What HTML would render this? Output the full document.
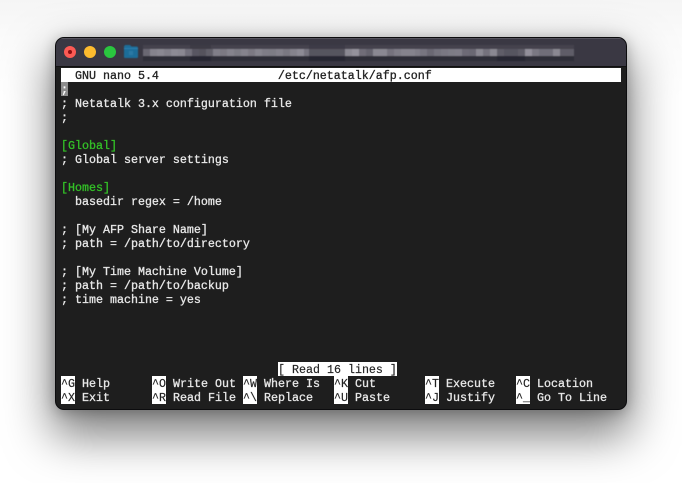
<!DOCTYPE html>
<html><head><meta charset="utf-8"><style>
html,body{margin:0;padding:0;background:#fff}
body{width:682px;height:483px;overflow:hidden;position:relative;font-family:"Liberation Mono",monospace}
#bg{position:absolute;left:0;top:0;width:682px;height:483px;background:linear-gradient(#f5f5f5 0,#fbfbfb 40px,#fff 100px)}
#win{position:absolute;left:55px;top:37px;width:570px;height:371px;border:1px solid #0c0c0e;border-radius:9px;background:#1e1e1e;box-shadow:0 22px 46px 4px rgba(0,0,0,.5),0 2px 14px rgba(0,0,0,.25);overflow:hidden}
#bar{position:absolute;left:0;top:0;width:570px;height:28px;background:#3a3843;border-bottom:1px solid #111;box-shadow:inset 0 1px 0 #55535d}
.d{position:absolute;width:12px;height:12px;border-radius:50%;top:8px}
#t{position:absolute;left:0;top:0;width:682px;height:483px;color:#e8e8e8;font-size:11.67px;line-height:16px}
#t div{position:absolute;white-space:pre;height:14px;letter-spacing:0;-webkit-text-stroke:.3px currentColor}
.i{background:#fff;color:#222}
#t div.i{-webkit-text-stroke:.15px currentColor}
.g{color:#33c127}
svg{position:absolute}
</style></head><body>
<div id="bg"></div>
<div id="win"><div id="bar">
<div class="d" style="left:8px;background:#fc5a54"><span style="position:absolute;left:4px;top:4px;width:4px;height:4px;border-radius:50%;background:#8e0d10"></span></div>
<div class="d" style="left:28px;background:#fdbb2e"></div>
<div class="d" style="left:48px;background:#2ac63f"></div>
</div></div>
<svg style="left:120px;top:40px" width="470" height="26" viewBox="120 40 470 26">
<defs><filter id="b" x="-5%" y="-30%" width="110%" height="160%"><feGaussianBlur stdDeviation=".6"/></filter></defs>
<g filter="url(#b)">
<path d="M124 47q0-2 2-2h4l1.500 1.500h5q1.500 0 1.500 1.500v9q0 1-1 1h-12q-1 0-1-1z" fill="#1f6d99"/>
<rect x="124" y="48" width="14" height="1" fill="#2d7fae"/>
<rect x="129" y="51" width="4" height="4" fill="#2b79a5"/>
<rect x="143" y="56" width="431" height="5" fill="#2f2d37"/>
<rect x="143" y="45" width="431" height="4" fill="#45434e"/>
<rect x="190" y="45" width="21" height="4" fill="#3c3a45"/>
<rect x="309" y="45" width="36" height="4" fill="#3d3b46"/>
<rect x="190" y="56" width="21" height="5" fill="#282630"/>
<rect x="309" y="56" width="36" height="5" fill="#272530"/>
<rect x="497" y="56" width="28" height="5" fill="#282630"/>
<rect x="143" y="49" width="7" height="7" fill="#6a6873"/>
<rect x="150" y="49" width="7" height="7" fill="#85838d"/>
<rect x="157" y="49" width="7" height="7" fill="#8a8892"/>
<rect x="164" y="49" width="7" height="7" fill="#82808a"/>
<rect x="171" y="49" width="7" height="7" fill="#8d8b95"/>
<rect x="178" y="49" width="7" height="7" fill="#8a8892"/>
<rect x="185" y="49" width="7" height="7" fill="#72707b"/>
<rect x="192" y="49" width="7" height="7" fill="#595762"/>
<rect x="199" y="49" width="7" height="7" fill="#54525d"/>
<rect x="206" y="49" width="7" height="7" fill="#62606b"/>
<rect x="213" y="49" width="7" height="7" fill="#807e88"/>
<rect x="220" y="49" width="7" height="7" fill="#7b7983"/>
<rect x="227" y="49" width="7" height="7" fill="#85838d"/>
<rect x="234" y="49" width="7" height="7" fill="#7d7b85"/>
<rect x="241" y="49" width="7" height="7" fill="#85838d"/>
<rect x="248" y="49" width="7" height="7" fill="#7b7983"/>
<rect x="255" y="49" width="7" height="7" fill="#87858f"/>
<rect x="262" y="49" width="7" height="7" fill="#7f7d87"/>
<rect x="269" y="49" width="7" height="7" fill="#7d7b85"/>
<rect x="276" y="49" width="7" height="7" fill="#83818b"/>
<rect x="283" y="49" width="7" height="7" fill="#7a7882"/>
<rect x="290" y="49" width="7" height="7" fill="#85838d"/>
<rect x="297" y="49" width="7" height="7" fill="#8d8b95"/>
<rect x="304" y="49" width="5" height="7" fill="#777580"/>
<rect x="309" y="49" width="36" height="7" fill="#56545f"/>
<rect x="345" y="49" width="7" height="7" fill="#8b8993"/>
<rect x="352" y="49" width="7" height="7" fill="#94929c"/>
<rect x="359" y="49" width="7" height="7" fill="#6f6d78"/>
<rect x="366" y="49" width="7" height="7" fill="#65636e"/>
<rect x="373" y="49" width="7" height="7" fill="#8a8892"/>
<rect x="380" y="49" width="7" height="7" fill="#8a8892"/>
<rect x="387" y="49" width="7" height="7" fill="#74727d"/>
<rect x="394" y="49" width="7" height="7" fill="#7f7d87"/>
<rect x="401" y="49" width="7" height="7" fill="#85838d"/>
<rect x="408" y="49" width="7" height="7" fill="#85838d"/>
<rect x="415" y="49" width="5" height="7" fill="#7f7d87"/>
<rect x="420" y="49" width="7" height="7" fill="#777580"/>
<rect x="427" y="49" width="7" height="7" fill="#6a6873"/>
<rect x="434" y="49" width="7" height="7" fill="#75737e"/>
<rect x="441" y="49" width="7" height="7" fill="#7a7883"/>
<rect x="448" y="49" width="7" height="7" fill="#7d7b86"/>
<rect x="455" y="49" width="7" height="7" fill="#7f7d88"/>
<rect x="462" y="49" width="7" height="7" fill="#6d6b76"/>
<rect x="469" y="49" width="7" height="7" fill="#6a6873"/>
<rect x="476" y="49" width="7" height="7" fill="#8a8892"/>
<rect x="483" y="49" width="7" height="7" fill="#74727d"/>
<rect x="490" y="49" width="7" height="7" fill="#8a8892"/>
<rect x="497" y="49" width="7" height="7" fill="#5f5d68"/>
<rect x="504" y="49" width="14" height="7" fill="#565460"/>
<rect x="518" y="49" width="7" height="7" fill="#5f5d68"/>
<rect x="525" y="49" width="7" height="7" fill="#928f9a"/>
<rect x="532" y="49" width="7" height="7" fill="#7a7883"/>
<rect x="539" y="49" width="14" height="7" fill="#706e79"/>
<rect x="553" y="49" width="7" height="7" fill="#8a8892"/>
<rect x="560" y="49" width="14" height="7" fill="#5f5d68"/>
</g></svg>
<div id="t">
<div style="left:61px;top:68px;width:560px;background:#fff;color:#222">  GNU nano 5.4                 /etc/netatalk/afp.conf</div>
<div style="left:61px;top:82px;width:7px;background:#8c8c8c;color:#fff">;</div>
<div style="left:61px;top:96px">; Netatalk 3.x configuration file</div>
<div style="left:61px;top:110px">;</div>
<div class="g" style="left:61px;top:138px">[Global]</div>
<div style="left:61px;top:152px">; Global server settings</div>
<div class="g" style="left:61px;top:180px">[Homes]</div>
<div style="left:61px;top:194px">  basedir regex = /home</div>
<div style="left:61px;top:222px">; [My AFP Share Name]</div>
<div style="left:61px;top:236px">; path = /path/to/directory</div>
<div style="left:61px;top:264px">; [My Time Machine Volume]</div>
<div style="left:61px;top:278px">; path = /path/to/backup</div>
<div style="left:61px;top:292px">; time machine = yes</div>
<div class="i" style="left:278px;top:362px">[ Read 16 lines ]</div>
<div class="i" style="left:61px;top:376px">^G</div><div style="left:82px;top:376px">Help</div>
<div class="i" style="left:61px;top:390px">^X</div><div style="left:82px;top:390px">Exit</div>
<div class="i" style="left:152px;top:376px">^O</div><div style="left:173px;top:376px">Write Out</div>
<div class="i" style="left:152px;top:390px">^R</div><div style="left:173px;top:390px">Read File</div>
<div class="i" style="left:243px;top:376px">^W</div><div style="left:264px;top:376px">Where Is</div>
<div class="i" style="left:243px;top:390px">^\</div><div style="left:264px;top:390px">Replace</div>
<div class="i" style="left:334px;top:376px">^K</div><div style="left:355px;top:376px">Cut</div>
<div class="i" style="left:334px;top:390px">^U</div><div style="left:355px;top:390px">Paste</div>
<div class="i" style="left:425px;top:376px">^T</div><div style="left:446px;top:376px">Execute</div>
<div class="i" style="left:425px;top:390px">^J</div><div style="left:446px;top:390px">Justify</div>
<div class="i" style="left:516px;top:376px">^C</div><div style="left:537px;top:376px">Location</div>
<div class="i" style="left:516px;top:390px">^_</div><div style="left:537px;top:390px">Go To Line</div>
</div>
</body></html>
